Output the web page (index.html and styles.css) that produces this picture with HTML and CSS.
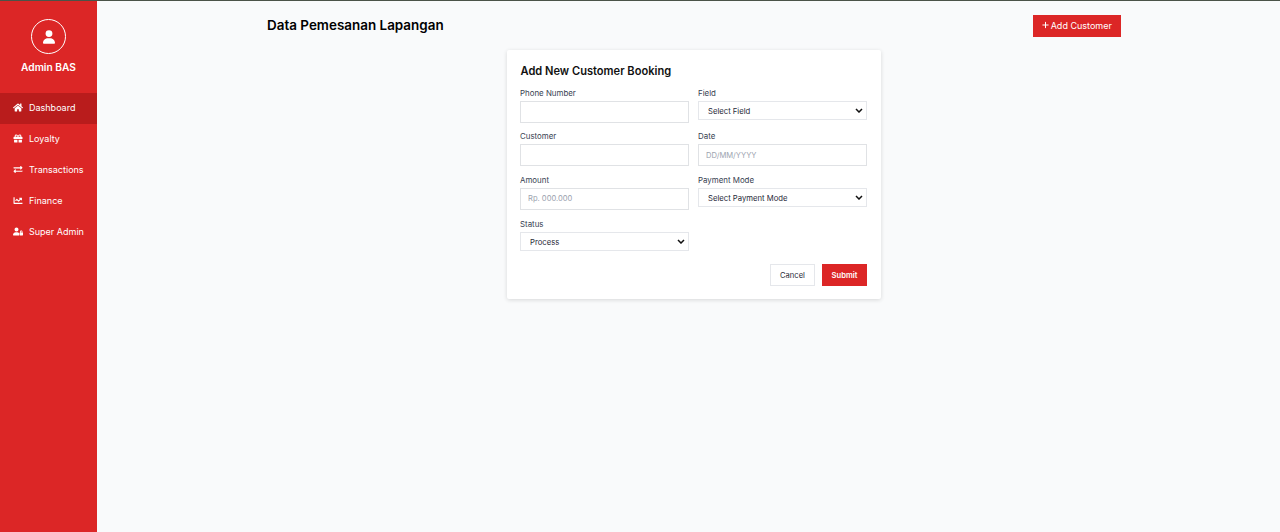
FILE: index.html
```html
<!DOCTYPE html>
<html lang="id">
<head>
<meta charset="utf-8">
<title>Data Pemesanan Lapangan</title>
<link rel="stylesheet" href="styles.css">
</head>
<body>
<div class="app">
  <aside class="sidebar">
    <div class="profile">
      <div class="avatar">
        <svg viewBox="0 0 448 512" class="avatar-icon"><path fill="currentColor" d="M224 256a128 128 0 1 0 0-256 128 128 0 1 0 0 256zm-45.700 48C79.800 304 0 383.800 0 482.300 0 498.700 13.300 512 29.700 512h388.600c16.400 0 29.700-13.300 29.700-29.700C448 383.800 368.200 304 269.700 304h-91.400z"/></svg>
      </div>
      <div class="admin-name">Admin BAS</div>
    </div>
    <nav class="nav">
      <a class="nav-item active">
        <svg viewBox="0 0 576 512" class="nav-icon"><path fill="currentColor" d="M280.400 148.300 96 300.100V464a16 16 0 0 0 16 16l112-.3a16 16 0 0 0 15.900-16V368a16 16 0 0 1 16-16h64a16 16 0 0 1 16 16v95.600a16 16 0 0 0 16 16.100L464 480a16 16 0 0 0 16-16V300L295.700 148.300a12.200 12.200 0 0 0-15.300 0zM571.600 251.500 488 182.600V44.100a12 12 0 0 0-12-12h-56a12 12 0 0 0-12 12v72.600L318.500 43a48 48 0 0 0-61 0L4.300 251.500a12 12 0 0 0-1.600 16.900l25.500 31A12 12 0 0 0 45.200 301l235.200-193.700a12.200 12.200 0 0 1 15.300 0L530.900 301a12 12 0 0 0 16.900-1.600l25.500-31a12 12 0 0 0-1.700-16.900z"/></svg>
        <span>Dashboard</span>
      </a>
      <a class="nav-item">
        <svg viewBox="0 0 512 512" class="nav-icon"><path fill="currentColor" d="M32 448c0 17.700 14.300 32 32 32h160V320H32v128zm256 32h160c17.700 0 32-14.300 32-32V320H288v160zm192-320h-42.100c6.200-12.100 10.100-25.500 10.100-40 0-48.500-39.500-88-88-88-41.600 0-68.500 21.300-103 68.300-34.500-47-61.400-68.300-103-68.300-48.500 0-88 39.500-88 88 0 14.500 3.800 27.900 10.100 40H32c-17.700 0-32 14.300-32 32v80c0 8.800 7.200 16 16 16h480c8.800 0 16-7.200 16-16v-80c0-17.700-14.300-32-32-32zm-326.100 0c-22.100 0-40-17.900-40-40s17.900-40 40-40c19.900 0 34.600 3.300 86.100 80h-86.100zm206.100 0h-86.100c51.400-76.500 65.700-80 86.100-80 22.100 0 40 17.900 40 40s-17.900 40-40 40z"/></svg>
        <span>Loyalty</span>
      </a>
      <a class="nav-item">
        <svg viewBox="0 0 512 512" class="nav-icon"><path fill="currentColor" d="M0 168v-16c0-13.300 10.700-24 24-24h360V80c0-21.400 25.900-32 41-17l80 80c9.400 9.400 9.400 24.600 0 33.900l-80 80C410 272 384 261.500 384 240v-48H24c-13.300 0-24-10.700-24-24zm488 152H128v-48c0-21.300-25.900-32.100-41-17l-80 80c-9.400 9.400-9.400 24.600 0 33.900l80 80c15 15 41 4.500 41-17v-48h360c13.300 0 24-10.700 24-24v-16c0-13.200-10.700-24-24-24z"/></svg>
        <span>Transactions</span>
      </a>
      <a class="nav-item">
        <svg viewBox="0 0 512 512" class="nav-icon"><path fill="currentColor" d="M496 384H64V80c0-8.800-7.200-16-16-16H16C7.200 64 0 71.200 0 80v336c0 17.700 14.300 32 32 32h464c8.800 0 16-7.200 16-16v-32c0-8.800-7.200-16-16-16zM464 96H345.900c-21.400 0-32.100 25.900-17 41l32.400 32.400L288 242.700l-73.400-73.400c-12.500-12.500-32.800-12.500-45.300 0l-68.700 68.700c-6.200 6.200-6.200 16.400 0 22.600l22.600 22.600c6.200 6.200 16.400 6.200 22.600 0L192 237.300l73.400 73.400c12.500 12.500 32.800 12.500 45.300 0l96-96 32.400 32.400c15.100 15.100 41 4.400 41-17V112c0-8.800-7.200-16-16-16z"/></svg>
        <span>Finance</span>
      </a>
      <a class="nav-item">
        <svg viewBox="0 0 640 512" class="nav-icon"><path fill="currentColor" d="M224 256A128 128 0 1 0 224 0a128 128 0 1 0 0 256zm-45.700 48C79.800 304 0 383.800 0 482.300C0 498.700 13.300 512 29.700 512H392.600c-5.400-9.400-8.600-20.300-8.600-32V352c0-2.100 .1-4.200 .3-6.300c-31-26-71-41.700-114.600-41.700H178.300zM528 240c17.700 0 32 14.300 32 32v48H496V272c0-17.700 14.300-32 32-32zm-80 32v48c-17.700 0-32 14.300-32 32V480c0 17.700 14.300 32 32 32H608c17.700 0 32-14.300 32-32V352c0-17.700-14.300-32-32-32V272c0-44.200-35.800-80-80-80s-80 35.800-80 80z"/></svg>
        <span>Super Admin</span>
      </a>
    </nav>
  </aside>
  <main class="main">
    <header class="topbar">
      <h1 class="page-title">Data Pemesanan Lapangan</h1>
      <button class="btn-add" type="button"><svg viewBox="0 0 448 512" class="plus-icon"><path fill="currentColor" d="M256 80c0-17.700-14.300-32-32-32s-32 14.300-32 32v144H48c-17.700 0-32 14.300-32 32s14.300 32 32 32h144v144c0 17.700 14.300 32 32 32s32-14.300 32-32V288h144c17.700 0 32-14.300 32-32s-14.300-32-32-32H256V80z"/></svg><span>Add Customer</span></button>
    </header>
    <section class="card">
      <h2 class="card-title">Add New Customer Booking</h2>
      <form class="form-grid">
        <div class="field">
          <label class="label">Phone Number</label>
          <input class="input" type="text">
        </div>
        <div class="field">
          <label class="label">Field</label>
          <select class="select"><option>Select Field</option></select>
        </div>
        <div class="field">
          <label class="label">Customer</label>
          <input class="input" type="text">
        </div>
        <div class="field">
          <label class="label">Date</label>
          <input class="input" type="text" placeholder="DD/MM/YYYY">
        </div>
        <div class="field">
          <label class="label">Amount</label>
          <input class="input" type="text" placeholder="Rp. 000.000">
        </div>
        <div class="field">
          <label class="label">Payment Mode</label>
          <select class="select"><option>Select Payment Mode</option></select>
        </div>
        <div class="field">
          <label class="label">Status</label>
          <select class="select"><option>Process</option></select>
        </div>
      </form>
      <div class="actions">
        <button class="btn-cancel" type="button">Cancel</button>
        <button class="btn-submit" type="button">Submit</button>
      </div>
    </section>
  </main>
</div>
</body>
</html>
```

FILE: styles.css
```css
* { box-sizing: border-box; }
html, body { margin: 0; height: 100%; }
body {
  font-family: Inter, "Liberation Sans", sans-serif;
  background: #f9fafb;
  color: #111827;
}
.app {
  display: flex;
  height: 532px;
  border-top: 1px solid #4b5348;
  overflow: hidden;
}
.sidebar {
  width: 97px;
  flex: none;
  background: #dc2626;
  color: #fff;
}
.profile {
  display: flex;
  flex-direction: column;
  align-items: center;
  padding-top: 18px;
}
.avatar {
  width: 35px;
  height: 35px;
  border: 1px solid #fff;
  border-radius: 50%;
  display: flex;
  align-items: center;
  justify-content: center;
}
.avatar-icon { width: 12px; height: 14px; }
.admin-name {
  margin-top: 6px;
  font-size: 10.200px;
  font-weight: 600;
  line-height: 14px;
}
.nav {
  margin-top: 19px;
  display: flex;
  flex-direction: column;
}
.nav-item {
  height: 31px;
  padding: 0 0 2px 13px;
  display: flex;
  align-items: center;
  gap: 6px;
  font-size: 9px;
  color: #fff;
}
.nav-item.active { background: #b91c1c; }
.nav-icon { width: 10px; height: 9px; flex: none; }
.main {
  flex: 1;
  padding: 14px 159px 0 170px;
}
.topbar {
  display: flex;
  justify-content: space-between;
  align-items: center;
  height: 22px;
}
.page-title {
  margin: 0 0 2px;
  font-size: 13.450px;
  font-weight: 600;
  color: #000;
}
.btn-add {
  width: 88px;
  height: 22px;
  padding: 0 0 2px;
  border: 0;
  background: #dc2626;
  color: #fff;
  font: 400 9px Inter, "Liberation Sans", sans-serif;
  display: flex;
  align-items: center;
  justify-content: center;
  gap: 1.500px;
}
.plus-icon { width: 7px; height: 8px; flex: none; }
.card {
  width: 374px;
  height: 249px;
  margin: 13px auto 0;
  padding: 14px 14px 0 13px;
  background: #fff;
  border-radius: 2px;
  box-shadow: 0 1px 4px rgba(0, 0, 0, 0.14);
}
.card-title {
  margin: 0 0 9.600px;
  padding-left: 0.500px;
  font-size: 11.100px;
  font-weight: 600;
  line-height: 15px;
  color: #111;
}
.form-grid {
  display: grid;
  grid-template-columns: 169px 169px;
  grid-auto-rows: 43.700px;
  column-gap: 9px;
}
.field { display: flex; flex-direction: column; align-items: stretch; }
.label {
  font-size: 7.900px;
  line-height: 9px;
  margin-bottom: 3px;
  color: #374151;
}
.input {
  height: 22px;
  border: 1px solid #e0e2e5;
  background: #fff;
  padding: 0 7px;
  font: 400 7.600px Inter, "Liberation Sans", sans-serif;
  border-radius: 0;
  outline: none;
}
.input::placeholder { color: #9ca3af; opacity: 1; }
.select {
  appearance: none;
  height: 19px;
  border: 1px solid #e5e7eb;
  background: #fff url("data:image/svg+xml,%3Csvg xmlns='http://www.w3.org/2000/svg' viewBox='0 0 8 5'%3E%3Cpath d='M1 1l3 3 3-3' fill='none' stroke='%23111' stroke-width='1.500'/%3E%3C/svg%3E") no-repeat right 3px center / 8px 5px;
  padding: 2px 5px 0 9px;
  font: 400 7.700px Inter, "Liberation Sans", sans-serif;
  color: #1f2937;
  border-radius: 0;
}
.actions {
  display: flex;
  justify-content: flex-end;
  gap: 7px;
  margin-top: 0.600px;
}
.btn-cancel, .btn-submit {
  height: 22px;
  padding: 1px 0 0;
  font: 400 7.600px Inter, "Liberation Sans", sans-serif;
  border-radius: 0;
}
.btn-cancel {
  width: 45px;
  background: #fff;
  border: 1px solid #e5e7eb;
  color: #1f2937;
}
.btn-submit {
  width: 45px;
  background: #dc2626;
  border: 0;
  color: #fff;
  font-weight: 600;
}
```
